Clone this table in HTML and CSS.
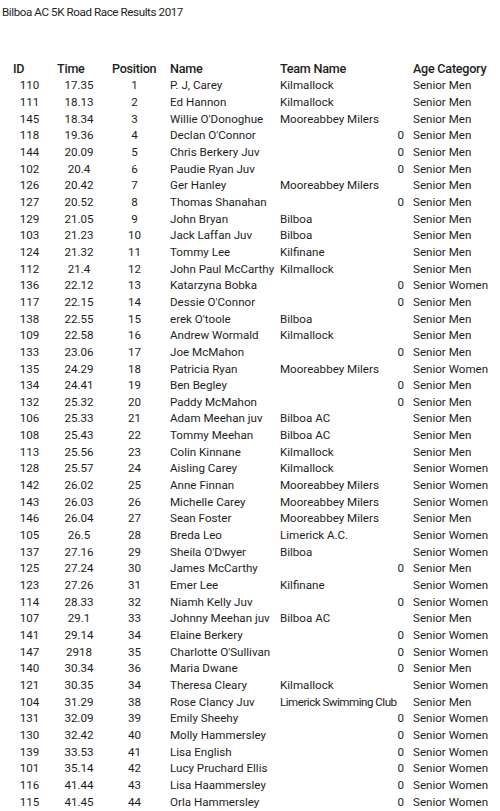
FILE: index.html
```html
<!DOCTYPE html>
<html>
<head>
<meta charset="utf-8">
<link rel="stylesheet" href="styles.css">
</head>
<body>
<div class="title">Bilboa AC 5K Road Race Results 2017</div>
<div class="sheet">
  <div class="row head">
    <div class="c id">ID</div><div class="c time">Time</div><div class="c pos">Position</div><div class="c name">Name</div><div class="c team">Team Name</div><div class="c age">Age Category</div>
  </div>
  <div class="row"><div class="c id">110</div><div class="c time">17.35</div><div class="c pos">1</div><div class="c name">P. J, Carey</div><div class="c team">Kilmallock</div><div class="c age">Senior Men</div></div>
  <div class="row"><div class="c id">111</div><div class="c time">18.13</div><div class="c pos">2</div><div class="c name">Ed Hannon</div><div class="c team">Kilmallock</div><div class="c age">Senior Men</div></div>
  <div class="row"><div class="c id">145</div><div class="c time">18.34</div><div class="c pos">3</div><div class="c name">Willie O'Donoghue</div><div class="c team">Mooreabbey Milers</div><div class="c age">Senior Men</div></div>
  <div class="row"><div class="c id">118</div><div class="c time">19.36</div><div class="c pos">4</div><div class="c name">Declan O'Connor</div><div class="c team zero">0</div><div class="c age">Senior Men</div></div>
  <div class="row"><div class="c id">144</div><div class="c time">20.09</div><div class="c pos">5</div><div class="c name">Chris Berkery Juv</div><div class="c team zero">0</div><div class="c age">Senior Men</div></div>
  <div class="row"><div class="c id">102</div><div class="c time">20.4</div><div class="c pos">6</div><div class="c name">Paudie Ryan Juv</div><div class="c team zero">0</div><div class="c age">Senior Men</div></div>
  <div class="row"><div class="c id">126</div><div class="c time">20.42</div><div class="c pos">7</div><div class="c name">Ger Hanley</div><div class="c team">Mooreabbey Milers</div><div class="c age">Senior Men</div></div>
  <div class="row"><div class="c id">127</div><div class="c time">20.52</div><div class="c pos">8</div><div class="c name">Thomas Shanahan</div><div class="c team zero">0</div><div class="c age">Senior Men</div></div>
  <div class="row"><div class="c id">129</div><div class="c time">21.05</div><div class="c pos">9</div><div class="c name">John Bryan</div><div class="c team">Bilboa</div><div class="c age">Senior Men</div></div>
  <div class="row"><div class="c id">103</div><div class="c time">21.23</div><div class="c pos">10</div><div class="c name">Jack Laffan Juv</div><div class="c team">Bilboa</div><div class="c age">Senior Men</div></div>
  <div class="row"><div class="c id">124</div><div class="c time">21.32</div><div class="c pos">11</div><div class="c name">Tommy Lee</div><div class="c team">Kilfinane</div><div class="c age">Senior Men</div></div>
  <div class="row"><div class="c id">112</div><div class="c time">21.4</div><div class="c pos">12</div><div class="c name">John Paul McCarthy</div><div class="c team">Kilmallock</div><div class="c age">Senior Men</div></div>
  <div class="row"><div class="c id">136</div><div class="c time">22.12</div><div class="c pos">13</div><div class="c name">Katarzyna Bobka</div><div class="c team zero">0</div><div class="c age">Senior Women</div></div>
  <div class="row"><div class="c id">117</div><div class="c time">22.15</div><div class="c pos">14</div><div class="c name">Dessie O'Connor</div><div class="c team zero">0</div><div class="c age">Senior Men</div></div>
  <div class="row"><div class="c id">138</div><div class="c time">22.55</div><div class="c pos">15</div><div class="c name">erek O'toole</div><div class="c team">Bilboa</div><div class="c age">Senior Men</div></div>
  <div class="row"><div class="c id">109</div><div class="c time">22.58</div><div class="c pos">16</div><div class="c name">Andrew Wormald</div><div class="c team">Kilmallock</div><div class="c age">Senior Men</div></div>
  <div class="row"><div class="c id">133</div><div class="c time">23.06</div><div class="c pos">17</div><div class="c name">Joe McMahon</div><div class="c team zero">0</div><div class="c age">Senior Men</div></div>
  <div class="row"><div class="c id">135</div><div class="c time">24.29</div><div class="c pos">18</div><div class="c name">Patricia Ryan</div><div class="c team">Mooreabbey Milers</div><div class="c age">Senior Women</div></div>
  <div class="row"><div class="c id">134</div><div class="c time">24.41</div><div class="c pos">19</div><div class="c name">Ben Begley</div><div class="c team zero">0</div><div class="c age">Senior Men</div></div>
  <div class="row"><div class="c id">132</div><div class="c time">25.32</div><div class="c pos">20</div><div class="c name">Paddy McMahon</div><div class="c team zero">0</div><div class="c age">Senior Men</div></div>
  <div class="row"><div class="c id">106</div><div class="c time">25.33</div><div class="c pos">21</div><div class="c name">Adam Meehan juv</div><div class="c team">Bilboa AC</div><div class="c age">Senior Men</div></div>
  <div class="row"><div class="c id">108</div><div class="c time">25.43</div><div class="c pos">22</div><div class="c name">Tommy Meehan</div><div class="c team">Bilboa AC</div><div class="c age">Senior Men</div></div>
  <div class="row"><div class="c id">113</div><div class="c time">25.56</div><div class="c pos">23</div><div class="c name">Colin Kinnane</div><div class="c team">Kilmallock</div><div class="c age">Senior Men</div></div>
  <div class="row"><div class="c id">128</div><div class="c time">25.57</div><div class="c pos">24</div><div class="c name">Aisling Carey</div><div class="c team">Kilmallock</div><div class="c age">Senior Women</div></div>
  <div class="row"><div class="c id">142</div><div class="c time">26.02</div><div class="c pos">25</div><div class="c name">Anne Finnan</div><div class="c team">Mooreabbey Milers</div><div class="c age">Senior Women</div></div>
  <div class="row"><div class="c id">143</div><div class="c time">26.03</div><div class="c pos">26</div><div class="c name">Michelle Carey</div><div class="c team">Mooreabbey Milers</div><div class="c age">Senior Women</div></div>
  <div class="row"><div class="c id">146</div><div class="c time">26.04</div><div class="c pos">27</div><div class="c name">Sean Foster</div><div class="c team">Mooreabbey Milers</div><div class="c age">Senior Men</div></div>
  <div class="row"><div class="c id">105</div><div class="c time">26.5</div><div class="c pos">28</div><div class="c name">Breda Leo</div><div class="c team">Limerick A.C.</div><div class="c age">Senior Women</div></div>
  <div class="row"><div class="c id">137</div><div class="c time">27.16</div><div class="c pos">29</div><div class="c name">Sheila O'Dwyer</div><div class="c team">Bilboa</div><div class="c age">Senior Women</div></div>
  <div class="row"><div class="c id">125</div><div class="c time">27.24</div><div class="c pos">30</div><div class="c name">James McCarthy</div><div class="c team zero">0</div><div class="c age">Senior Men</div></div>
  <div class="row"><div class="c id">123</div><div class="c time">27.26</div><div class="c pos">31</div><div class="c name">Emer Lee</div><div class="c team">Kilfinane</div><div class="c age">Senior Women</div></div>
  <div class="row"><div class="c id">114</div><div class="c time">28.33</div><div class="c pos">32</div><div class="c name">Niamh Kelly Juv</div><div class="c team zero">0</div><div class="c age">Senior Women</div></div>
  <div class="row"><div class="c id">107</div><div class="c time">29.1</div><div class="c pos">33</div><div class="c name">Johnny Meehan juv</div><div class="c team">Bilboa AC</div><div class="c age">Senior Men</div></div>
  <div class="row"><div class="c id">141</div><div class="c time">29.14</div><div class="c pos">34</div><div class="c name">Elaine Berkery</div><div class="c team zero">0</div><div class="c age">Senior Women</div></div>
  <div class="row"><div class="c id">147</div><div class="c time">2918</div><div class="c pos">35</div><div class="c name">Charlotte O'Sullivan</div><div class="c team zero">0</div><div class="c age">Senior Women</div></div>
  <div class="row"><div class="c id">140</div><div class="c time">30.34</div><div class="c pos">36</div><div class="c name">Maria Dwane</div><div class="c team zero">0</div><div class="c age">Senior Men</div></div>
  <div class="row"><div class="c id">121</div><div class="c time">30.35</div><div class="c pos">34</div><div class="c name">Theresa Cleary</div><div class="c team">Kilmallock</div><div class="c age">Senior Women</div></div>
  <div class="row"><div class="c id">104</div><div class="c time">31.29</div><div class="c pos">38</div><div class="c name">Rose Clancy Juv</div><div class="c team tight">Limerick Swimming Club</div><div class="c age">Senior Men</div></div>
  <div class="row"><div class="c id">131</div><div class="c time">32.09</div><div class="c pos">39</div><div class="c name">Emily Sheehy</div><div class="c team zero">0</div><div class="c age">Senior Women</div></div>
  <div class="row"><div class="c id">130</div><div class="c time">32.42</div><div class="c pos">40</div><div class="c name">Molly Hammersley</div><div class="c team zero">0</div><div class="c age">Senior Women</div></div>
  <div class="row"><div class="c id">139</div><div class="c time">33.53</div><div class="c pos">41</div><div class="c name">Lisa English</div><div class="c team zero">0</div><div class="c age">Senior Women</div></div>
  <div class="row"><div class="c id">101</div><div class="c time">35.14</div><div class="c pos">42</div><div class="c name">Lucy Pruchard Ellis</div><div class="c team zero">0</div><div class="c age">Senior Women</div></div>
  <div class="row"><div class="c id">116</div><div class="c time">41.44</div><div class="c pos">43</div><div class="c name">Lisa Haammersley</div><div class="c team zero">0</div><div class="c age">Senior Women</div></div>
  <div class="row"><div class="c id">115</div><div class="c time">41.45</div><div class="c pos">44</div><div class="c name">Orla Hammersley</div><div class="c team zero">0</div><div class="c age">Senior Women</div></div>
</div>
</body>
</html>
```
FILE: styles.css
```css
* { box-sizing: border-box; }
html, body {
  margin: 0;
  padding: 0;
  background: #fff;
}
body {
  width: 500px;
  height: 811px;
  overflow: hidden;
  font-family: Roboto, "Liberation Sans", sans-serif;
  font-size: 11.6px;
  color: #1e1e1e;
}
.title {
  height: 24px;
  line-height: 24px;
  padding-left: 2px;
  font-size: 11.6px;
  letter-spacing: -0.4px;
}
.sheet {
  padding-top: 36.7px;
  padding-left: 11px;
}
.row {
  display: grid;
  grid-template-columns: 37px 62px 49px 119px 130px auto;
  height: 16.667px;
  line-height: 16.667px;
  white-space: nowrap;
}
.c { overflow: visible; }
.id, .time, .pos { text-align: center; }
.name { padding-left: 11px; }
.team { padding-left: 2px; }
.team.zero { text-align: right; padding-right: 4px; }
.team.tight { letter-spacing: -0.5px; }
.age { padding-left: 5px; }
.head .c {
  text-align: left;
  font-weight: 500;
  font-size: 12.6px;
  letter-spacing: -0.25px;
}
.head .id { padding-left: 2px; }
.head .time { padding-left: 9px; }
.head .pos { padding-left: 2px; }
```
